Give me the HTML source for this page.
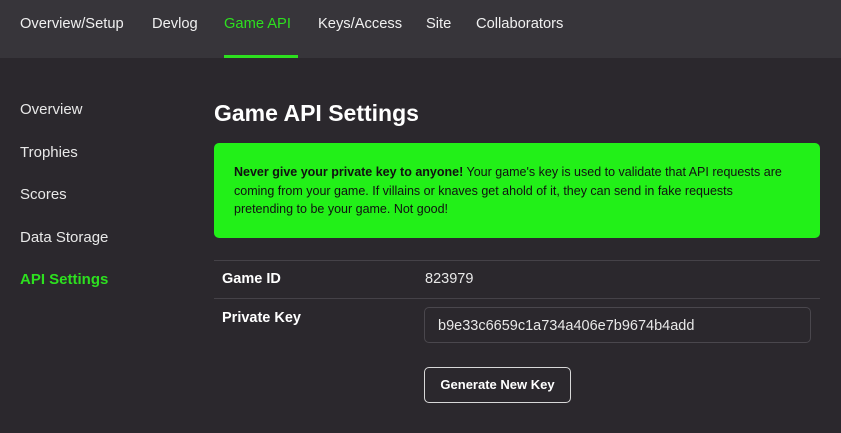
<!DOCTYPE html>
<html><head><style>
body{margin:0;width:841px;height:433px;background:#2b282d;font-family:"Liberation Sans",sans-serif;color:#fff;overflow:hidden;position:relative}
.hdr{position:absolute;left:0;top:0;width:841px;height:58px;background:#37353a}
.hdr span{position:absolute;top:16px;font-size:14.7px;color:#f0f0f0}
.ul{position:absolute;left:224px;top:55px;width:74px;height:3px;background:#2de01f}
.side{position:absolute;left:20px;font-size:15px;color:#e8e8e8}
h1{position:absolute;left:214px;top:100px;margin:0;font-size:23px;font-weight:bold}
.alert{position:absolute;left:214px;top:143px;width:606px;height:95px;background:#22f018;border-radius:5px;color:#111;font-size:12.5px;line-height:18.5px;box-sizing:border-box;padding:20px 32px 0 20px}
.line{position:absolute;left:214px;width:606px;height:1px;background:#454248}
.lbl{position:absolute;left:222px;font-size:14.5px;font-weight:bold}
.val{position:absolute;left:425px;font-size:14.5px;color:#e8e8e8}
.inp{position:absolute;left:424px;top:307px;width:387px;height:36px;box-sizing:border-box;border:1px solid #4a474d;border-radius:5px;padding:10px 0 0 13px;font-size:14.5px;color:#e8e8e8}
.btn{position:absolute;left:424px;top:367px;width:147px;height:36px;box-sizing:border-box;border:1px solid #d8d8d8;border-radius:5px;text-align:center;line-height:34px;font-size:13px;font-weight:bold}
</style></head><body>
<div class="hdr">
<span style="left:20px">Overview/Setup</span>
<span style="left:152px">Devlog</span>
<span style="left:224px;color:#2de01f">Game API</span>
<span style="left:318px">Keys/Access</span>
<span style="left:426px">Site</span>
<span style="left:476px">Collaborators</span>
<div class="ul"></div>
</div>
<div class="side" style="top:101px">Overview</div>
<div class="side" style="top:144px">Trophies</div>
<div class="side" style="top:186px">Scores</div>
<div class="side" style="top:229px">Data Storage</div>
<div class="side" style="top:271px;color:#2de01f;font-weight:bold">API Settings</div>
<h1>Game API Settings</h1>
<div class="alert"><b>Never give your private key to anyone!</b> Your game's key is used to validate that API requests are coming from your game. If villains or knaves get ahold of it, they can send in fake requests pretending to be your game. Not good!</div>
<div class="line" style="top:260px"></div>
<div class="line" style="top:298px"></div>
<div class="lbl" style="top:271px">Game ID</div>
<div class="val" style="top:271px">823979</div>
<div class="lbl" style="top:310px">Private Key</div>
<div class="inp">b9e33c6659c1a734a406e7b9674b4add</div>
<div class="btn">Generate New Key</div>
</body></html>
